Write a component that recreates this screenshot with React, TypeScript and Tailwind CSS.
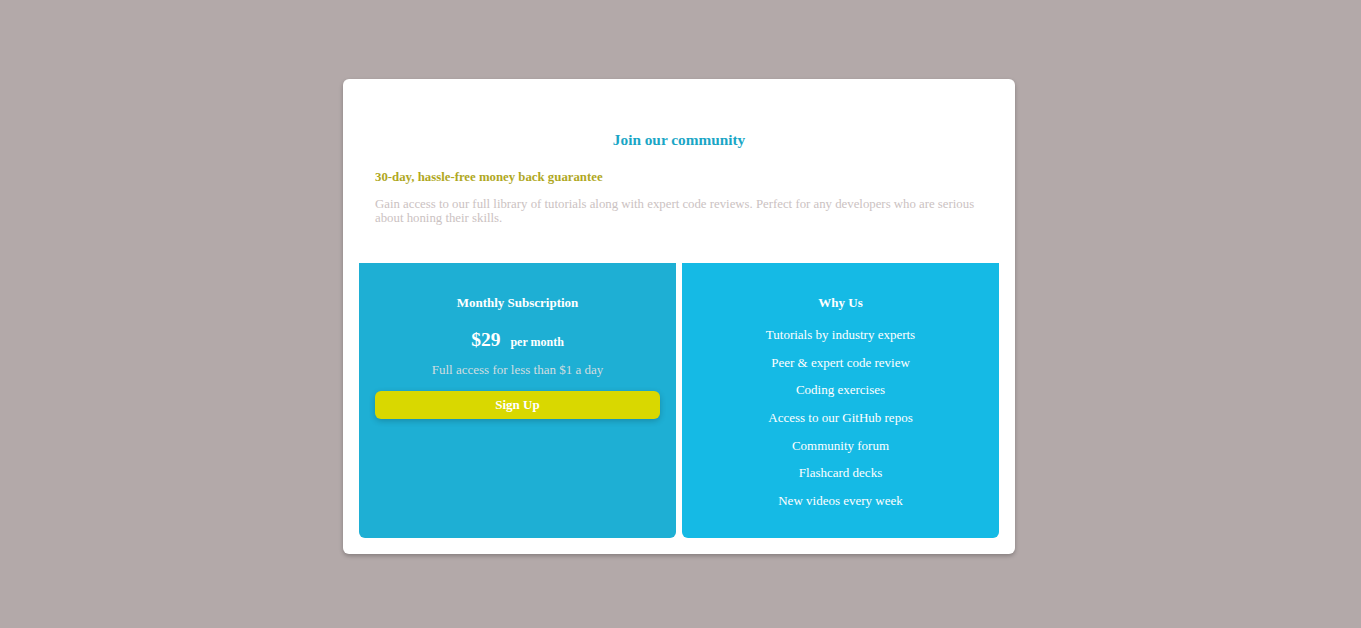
const features = [
  "Tutorials by industry experts",
  "Peer & expert code review",
  "Coding exercises",
  "Access to our GitHub repos",
  "Community forum",
  "Flashcard decks",
  "New videos every week",
];

export default function App() {
  return (
    <div className="flex min-h-screen w-full justify-center bg-[#b3a9a9] pt-[79px] pr-[3px] font-['Liberation_Serif','Times_New_Roman',serif]">
      <div className="h-fit w-[672px] rounded-md bg-white shadow-[0_2px_4px_rgba(0,0,0,0.25)]">
        <div className="px-8 pt-[52px] pb-[38px]">
          <h1 className="text-center text-[15.3px] font-bold leading-[18px] text-[#1aa6c6]">Join our community</h1>
          <h2 className="mt-5 text-[12.8px] font-bold leading-4 text-[#b0a81f]">30-day, hassle-free money back guarantee</h2>
          <p className="mt-3 text-[12.8px] leading-[14px] text-[#cbc2c2]">
            Gain access to our full library of tutorials along with expert code reviews. Perfect for any developers who are serious about honing their skills.
          </p>
        </div>
        <div className="flex gap-[6px] px-4 pb-4">
          <div className="flex h-[275px] flex-1 flex-col items-center rounded-b-md bg-[#1eafd4] px-4 pt-8 text-white">
            <h3 className="text-[13px] font-bold leading-4">Monthly Subscription</h3>
            <div className="mt-[18px] flex items-baseline leading-[22px]">
              <span className="text-[19.5px] font-bold">$29</span>
              <span className="ml-[10px] text-[12px] font-bold">per month</span>
            </div>
            <p className="mt-[9px] text-[13px] leading-4 text-[#d2dde0]">Full access for less than $1 a day</p>
            <button className="mt-[13px] h-7 w-full rounded-md bg-[#d9d800] text-[13px] font-bold text-white shadow-[0_2px_6px_rgba(0,0,0,0.2)]">
              Sign Up
            </button>
          </div>
          <div className="flex h-[275px] flex-1 flex-col items-center rounded-b-md bg-[#15bae5] px-4 pt-8 text-white">
            <h3 className="text-[13px] font-bold leading-4">Why Us</h3>
            <ul className="mt-4 flex flex-col items-center gap-[11.7px]">
              {features.map((f) => (
                <li key={f} className="text-[13px] leading-4">{f}</li>
              ))}
            </ul>
          </div>
        </div>
      </div>
    </div>
  );
}
